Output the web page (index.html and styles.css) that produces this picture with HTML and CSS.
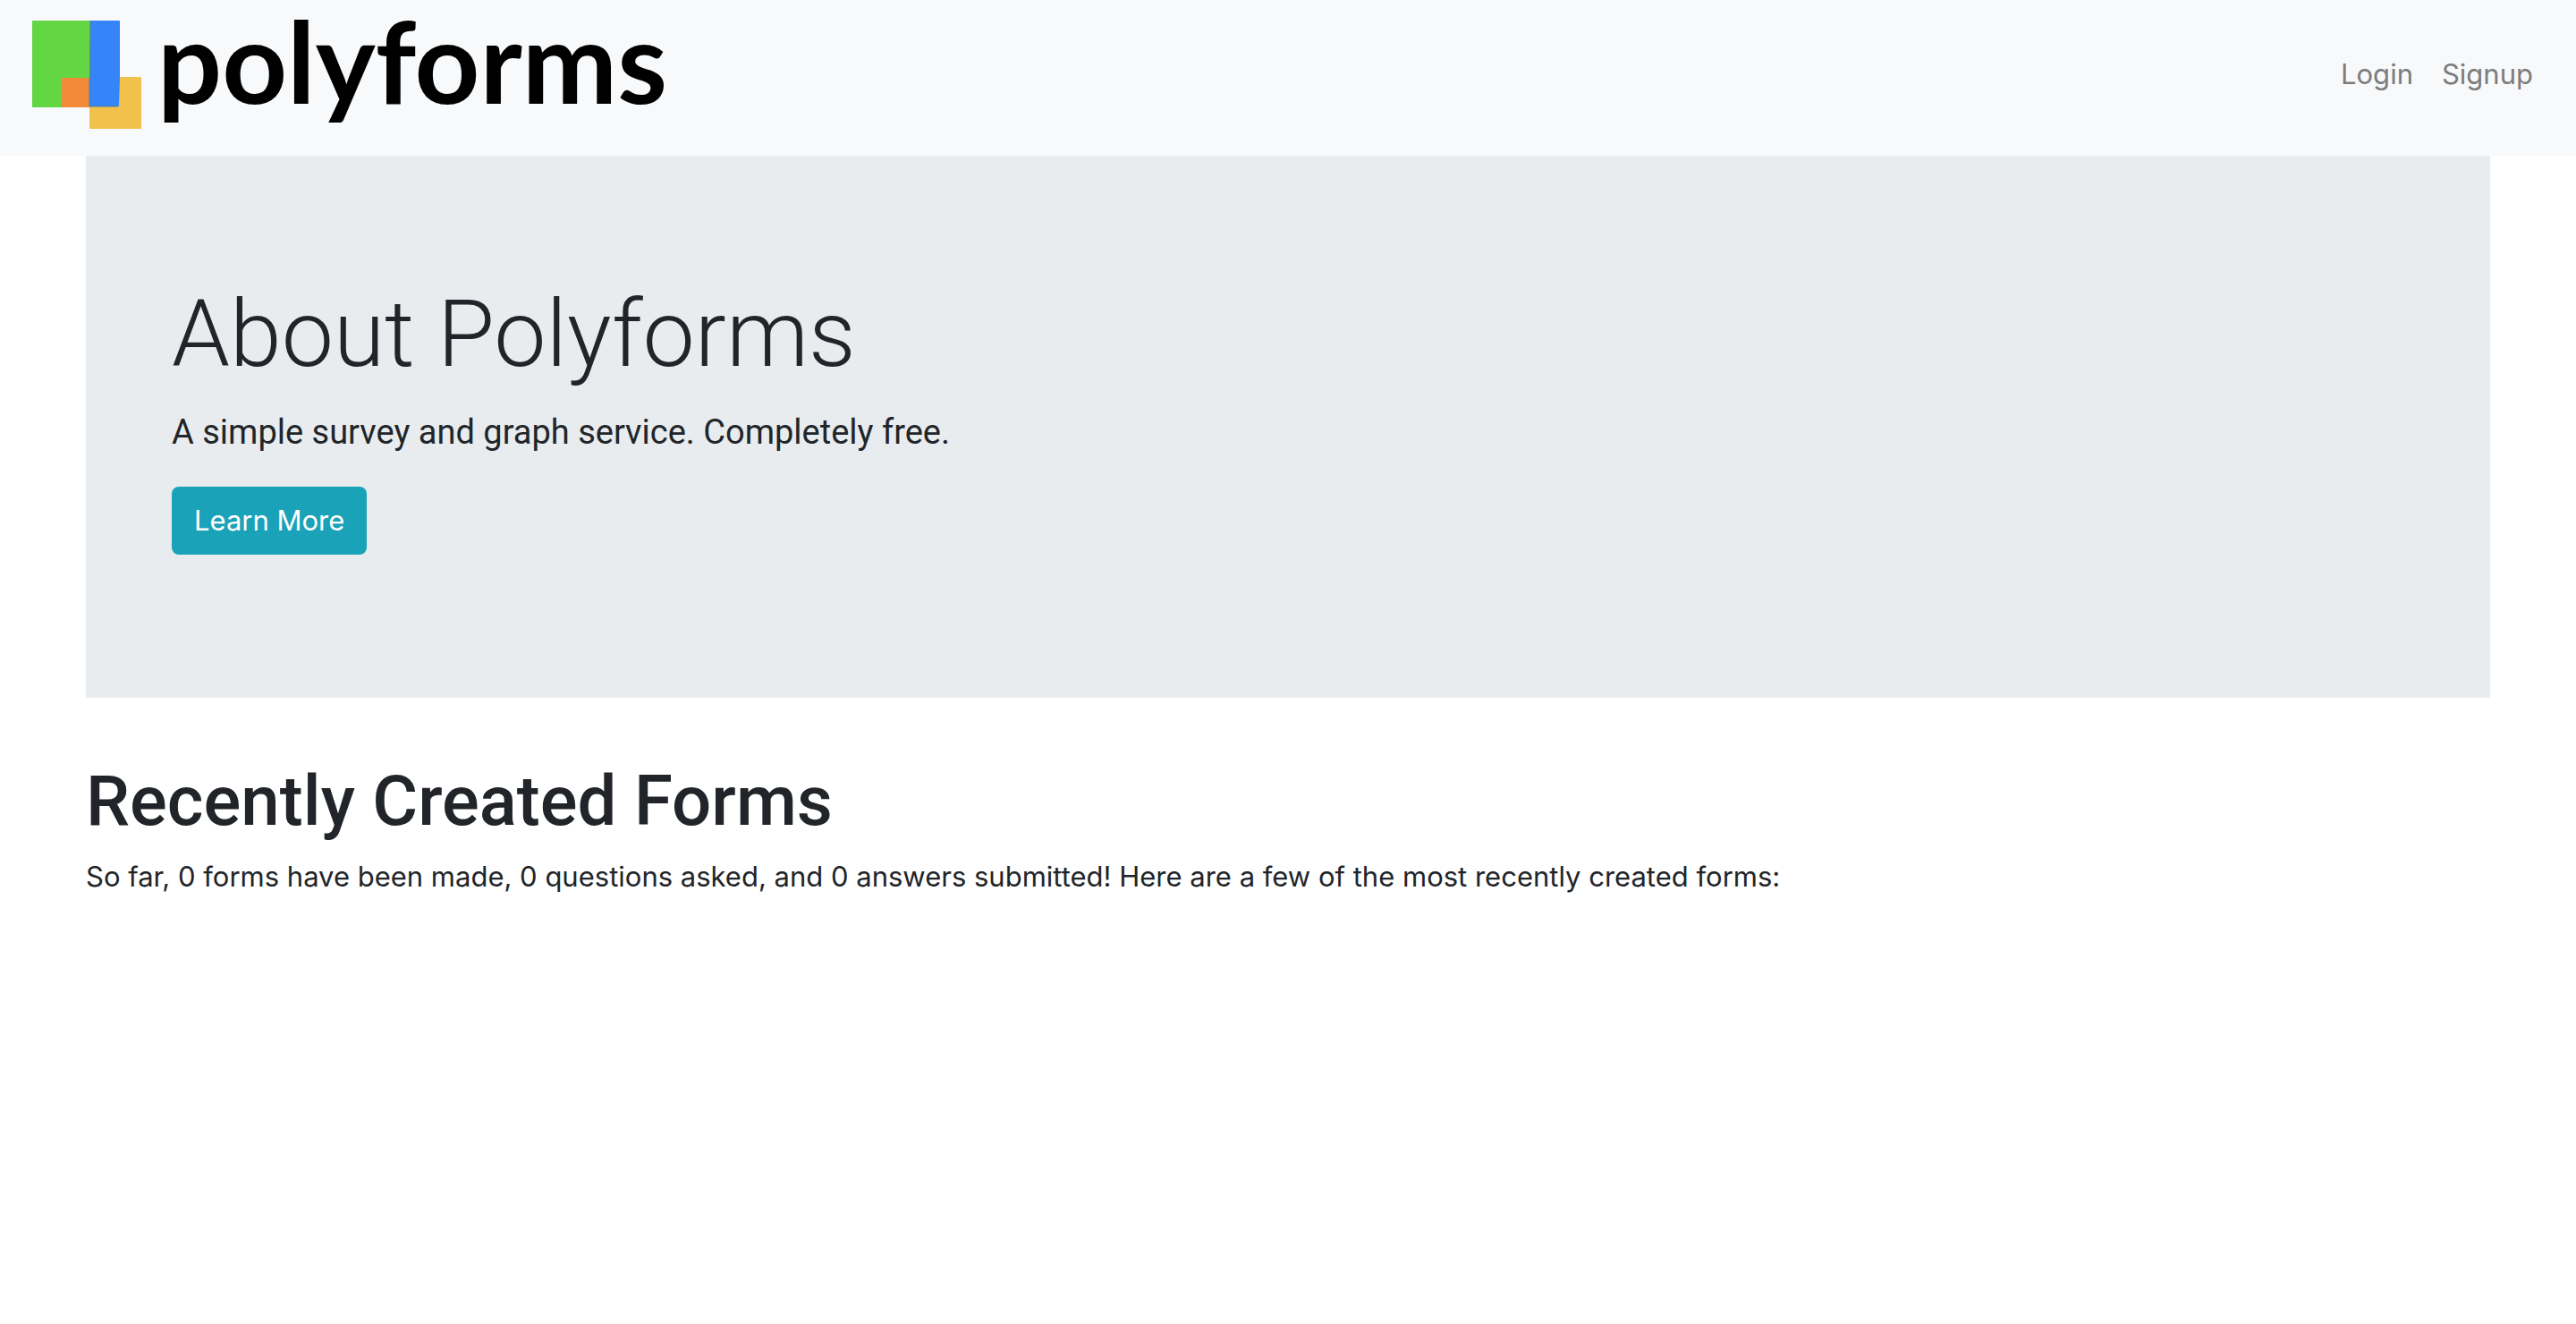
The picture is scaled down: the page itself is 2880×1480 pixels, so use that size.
FILE: index.html
```html
<!DOCTYPE html>
<html lang="en">
<head>
  <meta charset="utf-8">
  <meta name="viewport" content="width=device-width, initial-scale=1">
  <title>Polyforms</title>
  <link rel="stylesheet" href="styles.css">
</head>
<body>
  <header class="navbar">
    <a class="brand" href="#">
      <svg class="brand-mark" viewBox="0 0 122 121" aria-hidden="true">
        <rect x="0" y="0" width="66" height="97" rx="1" fill="#62d643"/>
        <rect x="64" y="63" width="58" height="58" rx="1" fill="#f2c14b"/>
        <rect x="33" y="64" width="32" height="33" fill="#f08a38"/>
        <path d="M65 0h32a1 1 0 0 1 1 1v62l-1 33H64V64z" fill="#3685f8"/>
        <path d="M65 0v64l-1 1v31h32" fill="none" stroke="#4c8290" stroke-width="1"/>
      </svg>
      <span class="brand-name">polyforms</span>
    </a>
    <nav class="nav-links">
      <a class="nav-link" href="#">Login</a>
      <a class="nav-link" href="#">Signup</a>
    </nav>
  </header>
  <main class="container">
    <section class="hero">
      <h1 class="hero-title">About Polyforms</h1>
      <p class="hero-lead">A simple survey and graph service. Completely free.</p>
      <a class="button" href="#">Learn More</a>
    </section>
    <section class="recent">
      <h2 class="recent-title">Recently Created Forms</h2>
      <p class="recent-text">So far, 0 forms have been made, 0 questions asked, and 0 answers submitted! Here are a few of the most recently created forms:</p>
    </section>
  </main>
</body>
</html>
```
FILE: styles.css
```css
* {
  box-sizing: border-box;
}

body {
  margin: 0;
  background: #fff;
  color: #212529;
  font-family: Inter, "Liberation Sans", sans-serif;
  font-size: 31px;
  line-height: 48px;
}

h1,
h2,
p {
  margin: 0;
}

a {
  text-decoration: none;
}

.navbar {
  display: flex;
  align-items: center;
  justify-content: space-between;
  padding: 16px 32px 24px;
  background: #f8f9fb;
}

.brand {
  display: flex;
  align-items: center;
  gap: 18px;
  padding-left: 4px;
  color: #000;
}

.brand-mark {
  width: 122px;
  height: 121px;
}

.brand-name {
  padding-bottom: 32px;
  font-family: Lato, "Liberation Sans", sans-serif;
  font-size: 127px;
  font-weight: 700;
  line-height: 102px;
}

.nav-links {
  display: flex;
}

.nav-link {
  padding: 0 16px;
  color: #7c7c7d;
}

.container {
  padding: 0 96px;
}

.hero {
  margin-bottom: 64px;
  padding: 128px 96px 160px;
  background: #e8ecef;
}

.hero-title,
.hero-lead,
.recent-title {
  font-family: Roboto, "Liberation Sans", sans-serif;
}

.hero-title {
  margin-bottom: 6px;
  font-size: 104px;
  font-weight: 350;
  line-height: 144px;
}

.hero-lead {
  margin-bottom: 30px;
  font-size: 38px;
  font-weight: 400;
  line-height: 62px;
}

.button {
  display: inline-block;
  padding: 14px 25px;
  border-radius: 8px;
  background: #1aa2b8;
  color: #fff;
  vertical-align: top;
}

.recent-title {
  margin-bottom: 8px;
  font-size: 78px;
  font-weight: 500;
  line-height: 104px;
}
```
